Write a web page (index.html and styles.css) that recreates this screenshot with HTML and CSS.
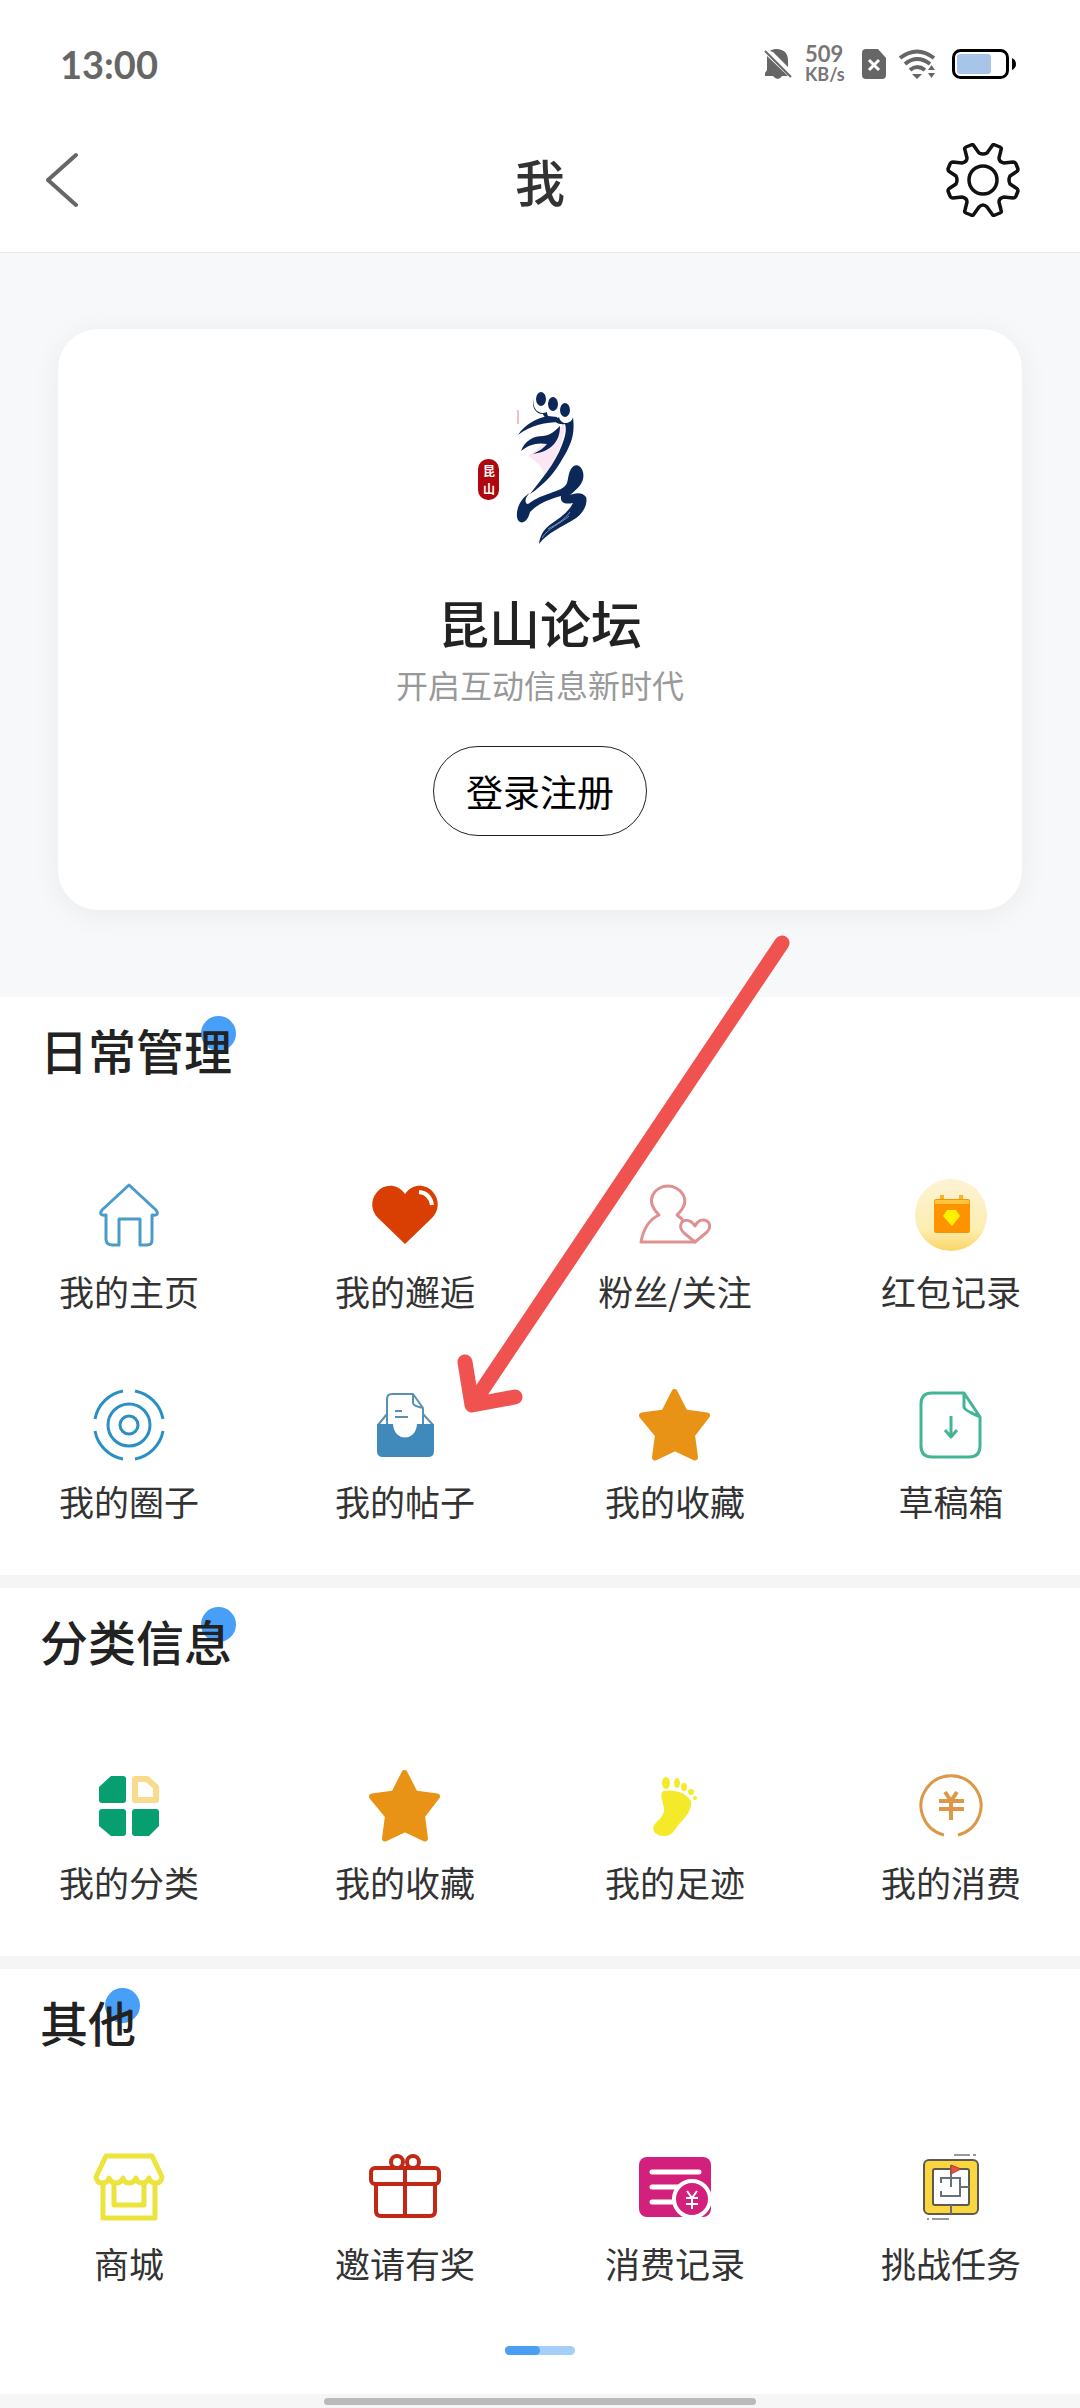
FILE: index.html
```html
<!DOCTYPE html>
<html lang="zh-CN">
<head>
    <meta charset="UTF-8">
    <meta name="viewport" content="width=device-width, initial-scale=1.0">
    <title>我</title>
    <link rel="stylesheet" href="styles.css">
</head>
<body>
    <!-- Star is used in two sections -->
    <svg class="symbols" aria-hidden="true">
        <symbol id="star" viewBox="0 0 72 72">
            <path d="M35.500 3L46 23.500L68 26.500L53 46L56 68.500L36 59L16 68.500L19 46L3 26.500L25 23.500Z" fill="#e99316" stroke="#e99316" stroke-width="6" stroke-linejoin="round"/>
        </symbol>
    </svg>

    <div class="status-bar">
        <span class="time">13:00</span>
        <div class="status-icons">
            <svg class="icon-bell" viewBox="0 0 28 32" fill="#666">
                <path d="M6 3C12-1 24 1 24 12V19L9 4ZM3 8L24 28H18Q14 34 9 28H1V25L3 22Z"/>
                <path d="M1 3L27 29" stroke="#666" stroke-width="2"/>
            </svg>
            <div class="speed">
                <span class="speed-value">509</span>
                <span class="speed-unit">KB/s</span>
            </div>
            <svg class="icon-sim" viewBox="0 0 24 30">
                <path d="M4 0H16L24 9V26Q24 30 20 30H4Q0 30 0 26V4Q0 0 4 0Z" fill="#666"/>
                <path d="M7 11L17 21M17 11L7 21" stroke="#fff" stroke-width="3"/>
            </svg>
            <svg class="icon-wifi" viewBox="0 0 40 30" fill="none" stroke="#666" stroke-width="4">
                <path d="M1 9Q18-4 35 9M6 15Q18 5 31 15M11 21Q18 15 26 21"/>
                <path d="M13 25H23L18 30ZM29 21L32.500 16L36 21ZM29 24H36L32.500 29Z" fill="#666" stroke="none"/>
            </svg>
            <svg class="icon-battery" viewBox="0 0 64 30">
                <rect x="1.500" y="1.500" width="54" height="27" rx="7" fill="#fff" stroke="#000" stroke-width="3"/>
                <rect x="5" y="5" width="34" height="20" rx="3" fill="#a6c5e8"/>
                <path d="M60 9Q64 11 64 15Q64 19 60 21Z"/>
            </svg>
        </div>
    </div>

    <header class="header">
        <button class="header-btn" type="button" aria-label="返回">
            <svg class="icon-back" viewBox="0 0 34 56" fill="none" stroke="#666" stroke-width="4" stroke-linecap="round" stroke-linejoin="round">
                <path d="M30 3L2 28L30 53"/>
            </svg>
        </button>
        <h1>我</h1>
        <button class="header-btn" type="button" aria-label="设置">
            <svg class="icon-gear" viewBox="0 0 74 74" fill="none" stroke="#111" stroke-width="3.500" stroke-linejoin="round">
                <g transform="translate(37 37)">
                    <path d="M-4-27Q0-25 4-27L9-34Q10-36 12-35L17-33Q19-32 18-30L16-22Q16-18 21-17L30-18Q32-18 33-16L35-11Q35-9 33-8L27-4Q25 0 27 4L33 8Q35 9 35 11L33 16Q32 18 30 18L21 17Q16 18 16 22L18 30Q19 32 17 33L12 35Q10 36 9 34L4 27Q0 23-4 27L-9 34Q-10 36-12 35L-17 33Q-19 32-18 30L-16 22Q-16 18-21 17L-30 18Q-32 18-33 16L-35 11Q-35 9-33 8L-27 4Q-25 0-27-4L-33-8Q-35-9-35-11L-33-16Q-32-18-30-18L-21-17Q-16-18-16-22L-18-30Q-19-32-17-33L-12-35Q-10-36-9-34Z"/>
                    <circle r="14"/>
                </g>
            </svg>
        </button>
    </header>

    <main>
        <section class="hero">
            <div class="login-card">
                <svg class="logo" viewBox="0 0 168 168" role="img" aria-label="昆山论坛">
                    <path d="M107 46C96 58 88 66 72 78C84 86 88 92 88 98C98 84 108 66 109 46Z" fill="#fbe6f4"/>
                    <path d="M62 32V46" stroke="#f3bcc8" stroke-width="2"/>
                    <g fill="#0b2859">
                        <path d="M78 20C75 30 83 38 91 34C91 41 99 44 103 39C105 48 116 46 117 39C119 56 116 66 104 85C96 98 86 108 74 116C84 103 99 86 106 67C109 59 111 52 109 46C102 47 99 44 97 41C91 42 88 39 87 36C79 36 75 28 78 20Z"/>
                        <path d="M62 57C69 46 81 40 92 38L101 39L104 44C90 44 75 47 62 57Z"/>
                        <path d="M65 73C69 62 78 58 87 58C95 57 99 53 104 48C104 61 98 73 77 76C83 73 88 70 91 66C81 64 72 67 65 73Z"/>
                        <path d="M74 115C66 119 60 129 61 139C62 147 71 147 74 134C82 126 91 122 105 118C104 124 108 127 117 125C112 135 102 141 95 146C87 152 84 158 83 166C92 154 106 149 117 142C128 136 132 125 130 119C126 114 120 115 114 117C124 109 129 103 127 94C125 86 118 85 115 91C111 98 113 104 109 108C102 115 89 114 72 126C68 125 69 119 74 115Z"/>
                    </g>
                    <path d="M86 160C92 150 104 146 113 138M92 151C101 146 108 142 114 134" fill="none" stroke="#7f95b5"/>
                    <g fill="#0b2859" stroke="#fff" stroke-width="2">
                        <ellipse cx="85" cy="21" rx="6" ry="8"/>
                        <ellipse cx="97" cy="26" rx="6" ry="8"/>
                        <ellipse cx="109" cy="32" rx="6" ry="8"/>
                    </g>
                    <rect x="22" y="81" width="21" height="41" rx="10" fill="#b0070e"/>
                    <text class="seal" x="33" y="98">昆</text>
                    <text class="seal" x="33" y="116">山</text>
                </svg>
                <h2>昆山论坛</h2>
                <p>开启互动信息新时代</p>
                <button class="login-btn" type="button">登录注册</button>
            </div>
        </section>

        <section class="section">
            <h3 class="section-title">日常管理</h3>
            <nav class="menu">
                <a class="menu-item" href="#">
                    <svg viewBox="0 0 72 72" fill="none" stroke="#4a9bc8" stroke-width="3" stroke-linejoin="round">
                        <path d="M36 6L9 31Q5 37 13 36V61Q14 66 19 66H26V40H47V66H54Q59 66 59 61V36Q67 37 63 31Z"/>
                    </svg>
                    <span>我的主页</span>
                </a>
                <a class="menu-item" href="#">
                    <svg viewBox="0 0 72 72">
                        <path d="M36 15C28 4 15 5 8 13C1 21 2 32 9 39L36 65L63 39C70 32 71 21 64 13C57 5 44 4 36 15Z" fill="#d93f02"/>
                        <path d="M50 13Q61 14 63 26" fill="none" stroke="#fff" stroke-width="4"/>
                    </svg>
                    <span>我的邂逅</span>
                </a>
                <a class="menu-item" href="#">
                    <svg viewBox="0 0 72 72" fill="none" stroke="#df9192" stroke-width="3" stroke-linejoin="round">
                        <path d="M44 41L38 36C55 20 40 7 29 7C17 7 4 20 20 36C9 41 4 52 2 63H57"/>
                        <path d="M56 47C52 41 47 40 43 43C40 48 42 51 45 54L56 63L68 53C72 49 71 44 68 42C64 40 59 41 56 47Z"/>
                    </svg>
                    <span>粉丝/关注</span>
                </a>
                <a class="menu-item" href="#">
                    <svg viewBox="0 0 72 72">
                        <defs>
                            <linearGradient id="coin" x1="0" y1="0" x2="0" y2="1">
                                <stop offset="0" stop-color="#fcf3d4"/>
                                <stop offset="0.700" stop-color="#fdeeb2"/>
                                <stop offset="1" stop-color="#fbd465"/>
                            </linearGradient>
                        </defs>
                        <circle cx="36" cy="36" r="36" fill="url(#coin)"/>
                        <path d="M27 16V22M46 16V22" stroke="#f5b32a" stroke-width="4"/>
                        <rect x="19" y="20" width="36" height="34" rx="2" fill="#fe9300"/>
                        <path d="M20 23H54" stroke="#ffc53c" stroke-width="4"/>
                        <path d="M32 31H41L45 37L37 47L28 37Z" fill="#fff000"/>
                    </svg>
                    <span>红包记录</span>
                </a>
                <a class="menu-item" href="#">
                    <svg viewBox="0 0 72 72" fill="none" stroke="#2a90c4" stroke-width="3">
                        <path d="M30 2A35 35 0 0 0 2 30M42 2A35 35 0 0 1 70 30M70 42A35 35 0 0 1 42 70M30 70A35 35 0 0 1 2 42"/>
                        <circle cx="36" cy="36" r="21"/>
                        <circle cx="36" cy="36" r="9"/>
                    </svg>
                    <span>我的圈子</span>
                </a>
                <a class="menu-item" href="#">
                    <svg viewBox="0 0 72 72" fill="none" stroke="#5890b5" stroke-width="2" stroke-linejoin="round">
                        <path d="M18 36V10Q18 5 23 5H44L54 19V36M44 5V14Q44 17 54 19M18 25L9 36M54 25L64 36"/>
                        <path d="M26 22H33M26 28H39"/>
                        <path d="M8 35H24C25 53 47 53 48 35H65V62Q65 68 59 68H14Q8 68 8 62Z" fill="#3f8aba" stroke="none"/>
                    </svg>
                    <span>我的帖子</span>
                </a>
                <a class="menu-item" href="#">
                    <svg><use href="#star"/></svg>
                    <span>我的收藏</span>
                </a>
                <a class="menu-item" href="#">
                    <svg viewBox="0 0 72 72" fill="none" stroke="#43b595" stroke-width="3" stroke-linejoin="round">
                        <path d="M49 4H17Q6 4 6 15V57Q6 68 17 68H54Q65 68 65 57V28ZM49 4V18Q49 21 65 28"/>
                        <path d="M36 27V48M30 41L36 48L42 41"/>
                    </svg>
                    <span>草稿箱</span>
                </a>
            </nav>

            <svg class="arrow" viewBox="0 0 350 490" fill="none" stroke="#f0524f" stroke-width="15" stroke-linecap="round" stroke-linejoin="round" aria-hidden="true">
                <path d="M332 10L22 472M15 429L22 472L65 464"/>
            </svg>
        </section>

        <section class="section">
            <h3 class="section-title">分类信息</h3>
            <nav class="menu">
                <a class="menu-item" href="#">
                    <svg viewBox="0 0 72 72" fill="#079f70">
                        <path d="M18 6H30Q33 6 33 9V30Q33 33 30 33H9Q6 33 6 30V17Z"/>
                        <path d="M9 39H30Q33 39 33 42V63Q33 66 30 66H18L6 56V42Q6 39 9 39Z"/>
                        <path d="M42 39H63Q66 39 66 42V56L56 66H42Q39 66 39 63V42Q39 39 42 39Z"/>
                        <path d="M42 9H54L63 17V30H42Z" fill="none" stroke="#f8db8d" stroke-width="6" stroke-linejoin="round"/>
                    </svg>
                    <span>我的分类</span>
                </a>
                <a class="menu-item" href="#">
                    <svg><use href="#star"/></svg>
                    <span>我的收藏</span>
                </a>
                <a class="menu-item" href="#">
                    <svg viewBox="0 0 72 72" fill="#f4ea2a">
                        <ellipse cx="27" cy="13" rx="4" ry="6"/>
                        <ellipse cx="38" cy="13" rx="3" ry="5"/>
                        <ellipse cx="45" cy="17" rx="3" ry="4"/>
                        <ellipse cx="52" cy="22" rx="3" ry="3"/>
                        <ellipse cx="56" cy="28" rx="2" ry="2"/>
                        <path d="M24 21C34 19 47 22 52 31C53 40 47 47 41 53C36 58 35 65 27 66C18 67 12 61 15 55C19 50 26 46 25 38C24 31 20 25 24 21Z"/>
                    </svg>
                    <span>我的足迹</span>
                </a>
                <a class="menu-item" href="#">
                    <svg viewBox="0 0 72 72" fill="none" stroke="#dc9747" stroke-width="3">
                        <path d="M29 65A30 30 0 1 1 43 65"/>
                        <path d="M30 22L36 31L42 22M24 31H49M24 39H49M36 31V50" stroke-width="4"/>
                    </svg>
                    <span>我的消费</span>
                </a>
            </nav>
        </section>

        <section class="section">
            <h3 class="section-title">其他</h3>
            <nav class="menu">
                <a class="menu-item" href="#">
                    <svg viewBox="0 0 72 72" fill="none" stroke="#ece43c" stroke-width="5" stroke-linejoin="round">
                        <path d="M13 5H59L69 26Q68 32 63 32Q57 32 56 27Q54 32 49 32Q44 32 43 27Q41 32 36 32Q31 32 30 27Q28 32 23 32Q18 32 16 27Q15 32 9 32Q4 32 3 26Z"/>
                        <path d="M10 32V67H62V32M21 32V54H51V32"/>
                    </svg>
                    <span>商城</span>
                </a>
                <a class="menu-item" href="#">
                    <svg viewBox="0 0 72 72" fill="none" stroke="#c12816" stroke-width="4">
                        <rect x="2" y="17" width="68" height="16" rx="4"/>
                        <path d="M7 33V60Q7 65 12 65H61Q66 65 66 60V33M36 17V65"/>
                        <circle cx="28" cy="11" r="6"/>
                        <circle cx="44" cy="11" r="6"/>
                    </svg>
                    <span>邀请有奖</span>
                </a>
                <a class="menu-item" href="#">
                    <svg viewBox="0 0 72 72" fill="none" stroke="#fff">
                        <rect y="6" width="72" height="60" rx="8" fill="#d3207c" stroke="none"/>
                        <path d="M13 21H60M13 36H42M13 51H34" stroke-width="5" stroke-linecap="round"/>
                        <circle cx="53" cy="48" r="18" fill="#d3207c" stroke-width="4"/>
                        <path d="M48 40L53 47L58 40M47 47H59M47 53H59M53 47V58" stroke-width="2"/>
                    </svg>
                    <span>消费记录</span>
                </a>
                <a class="menu-item" href="#">
                    <svg viewBox="0 0 72 72" fill="none" stroke="#5c5b50" stroke-width="2">
                        <rect x="9" y="9" width="54" height="54" rx="5" fill="#fbd640"/>
                        <rect x="18" y="18" width="36" height="36" rx="2" fill="#fff"/>
                        <path d="M26 32V27H45V45H26V40M45 36H54M36 54V63M36 14V36" stroke="#66707c"/>
                        <path d="M36 14L46 18L36 23Z" fill="#e8543a" stroke="#a34436" stroke-width="1"/>
                        <path d="M39 4H55M58 4H61M12 68H14M17 68H34" stroke="#999"/>
                    </svg>
                    <span>挑战任务</span>
                </a>
            </nav>
        </section>

        <div class="pager">
            <span class="pager-current"></span>
        </div>
    </main>

    <div class="home-bar">
        <span class="home-handle"></span>
    </div>
</body>
</html>
```

FILE: styles.css
```css
* {
    box-sizing: border-box;
}
body {
    font-family: "Noto Sans CJK SC", sans-serif;
    background-color: #fff;
    color: #333;
    margin: 0;
}
h1, h2, h3, p {
    margin: 0;
}
svg {
    display: block;
}
button {
    font-family: inherit;
    background: none;
    border: none;
    padding: 0;
    cursor: pointer;
}
.symbols {
    display: none;
}

/* Status bar */
.status-bar {
    display: flex;
    align-items: center;
    justify-content: space-between;
    height: 108px;
    padding: 20px 64px 0 60px;
}
.time {
    font-family: Lato, sans-serif;
    font-size: 38px;
    font-weight: 700;
    color: #666;
}
.status-icons {
    display: flex;
    align-items: center;
    gap: 13px;
}
.icon-bell {
    width: 28px;
    height: 32px;
}
.speed {
    display: flex;
    flex-direction: column;
    width: 44px;
    font-family: Lato, sans-serif;
    font-weight: 700;
    line-height: 20px;
    color: #777;
}
.speed-value {
    font-size: 22px;
}
.speed-unit {
    font-size: 18px;
}
.icon-sim {
    width: 24px;
    height: 30px;
}
.icon-wifi {
    width: 40px;
    height: 30px;
}
.icon-battery {
    width: 64px;
    height: 30px;
}

/* Header */
.header {
    display: flex;
    align-items: center;
    justify-content: space-between;
    height: 145px;
    padding: 0 46px;
    border-bottom: 1px solid #e6e6e6;
}
.header-btn {
    display: flex;
    width: 88px;
}
.header h1 {
    font-size: 50px;
    font-weight: 500;
    line-height: 64px;
}
.icon-back {
    width: 34px;
    height: 56px;
}
.icon-gear {
    width: 74px;
    height: 74px;
}

/* Login card */
.hero {
    padding: 76px 58px 87px;
    background-color: #f7f8fa;
}
.login-card {
    display: flex;
    flex-direction: column;
    align-items: center;
    padding: 49px 20px 74px;
    background: #fff;
    border-radius: 40px;
    box-shadow: 0 4px 30px rgba(0, 0, 0, 0.06);
}
.logo {
    width: 168px;
    height: 168px;
}
.seal {
    fill: #fff;
    font-size: 12px;
    font-weight: 700;
    text-anchor: middle;
}
.login-card h2 {
    margin-top: 44px;
    font-size: 51px;
    font-weight: 500;
    line-height: 64px;
    color: #222;
}
.login-card p {
    margin-top: 8px;
    font-size: 32px;
    line-height: 44px;
    color: #999;
}
.login-btn {
    height: 90px;
    margin-top: 40px;
    padding: 0 32px;
    font-size: 37px;
    color: #000;
    border: 1px solid #222;
    border-radius: 45px;
}

/* Menu sections */
.section {
    position: relative;
    padding: 22px 54px 48px;
}
.section + .section {
    border-top: 13px solid #f5f5f5;
}
.section-title {
    position: relative;
    z-index: 0;
    width: fit-content;
    margin-left: -14px;
    font-size: 48px;
    font-weight: 500;
    line-height: 60px;
    color: #222;
}
.section-title::after {
    content: "";
    position: absolute;
    z-index: -1;
    top: -3px;
    right: -4px;
    width: 35px;
    height: 35px;
    border-radius: 50%;
    background-color: #489ff7;
}
.menu {
    display: grid;
    grid-template-columns: 150px 138px 138px 150px;
    justify-content: space-between;
    justify-items: center;
    row-gap: 72px;
    margin-top: 100px;
}
.menu-item {
    display: flex;
    flex-direction: column;
    align-items: center;
    gap: 14px;
    width: 138px;
    font-size: 35px;
    line-height: 52px;
    white-space: nowrap;
    color: #333;
    text-decoration: none;
}
.menu-item svg {
    width: 72px;
    height: 72px;
}

/* Arrow drawn over the card and the menu */
.arrow {
    position: absolute;
    z-index: 2;
    top: -64px;
    left: calc(50% - 90px);
    width: 350px;
    height: 490px;
    pointer-events: none;
}

/* Bottom */
.pager {
    width: 70px;
    height: 9px;
    margin: 9px auto 39px;
    border-radius: 5px;
    background-color: #a5cff8;
}
.pager-current {
    display: block;
    width: 50%;
    height: 100%;
    border-radius: 5px;
    background-color: #4b9ff3;
}
.home-bar {
    padding: 4px 0 3px;
    background-color: #f6f6f6;
}
.home-handle {
    display: block;
    width: 40%;
    height: 7px;
    margin: 0 auto;
    border-radius: 4px;
    background-color: #bababa;
}
```
